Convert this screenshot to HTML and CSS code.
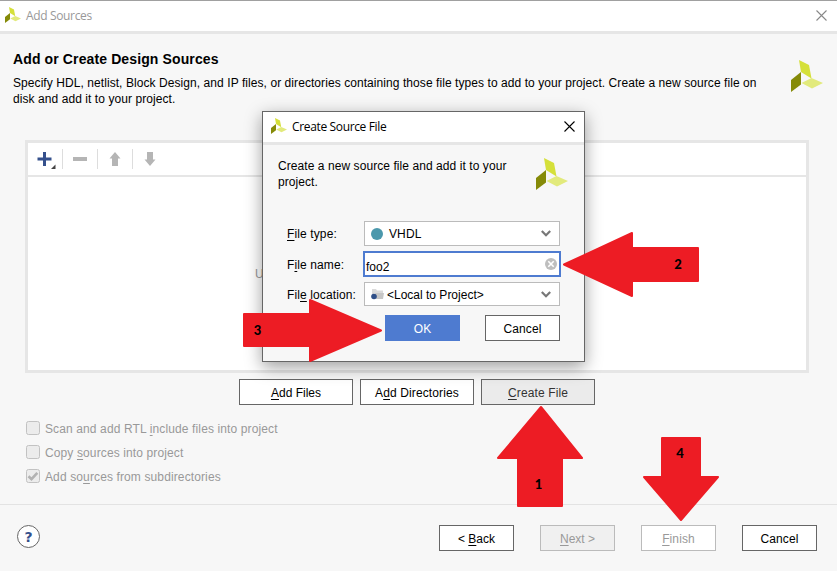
FILE: index.html
```html
<!DOCTYPE html>
<html lang="en">
<head>
<meta charset="utf-8">
<title>Add Sources</title>
<link rel="stylesheet" href="styles.css">
</head>
<body>
<svg width="0" height="0" class="defs">
  <symbol id="logo" viewBox="0 0 32 32">
    <path fill="#d5e03a" d="M8 0 18 5 20.500 18.500 10 12Z"/>
    <path fill="#858a08" d="M0 20 10 12V24.500L0 32Z"/>
    <path fill="#e2ea7c" d="M10.500 23 20.500 18 32 23 21 28.500Z"/>
  </symbol>
  <symbol id="close" viewBox="0 0 11 11"><path d="M.5.5l10 10M10.500.5l-10 10" fill="none" stroke="currentColor" stroke-width="1.100"/></symbol>
  <symbol id="chevron" viewBox="0 0 10 7"><path d="M.8 1 5 5.200 9.200 1" fill="none" stroke="#777" stroke-width="2.200"/></symbol>
</svg>
<div class="window">
  <header class="titlebar">
    <svg class="app-icon"><use href="#logo"/></svg><span class="title">Add Sources</span>
    <svg class="close"><use href="#close"/></svg>
  </header>
  <section class="intro">
    <div>
      <h1>Add or Create Design Sources</h1>
      <p>Specify HDL, netlist, Block Design, and IP files, or directories containing those file types to add to your project. Create a new source file on</p>
      <p>disk and add it to your project.</p>
    </div>
    <svg class="logo"><use href="#logo"/></svg>
  </section>
  <section class="panel">
    <div class="toolbar">
      <span class="tool"><svg width="20" height="20"><path d="M7.500 3v14M.5 10h14" stroke="#35508c" stroke-width="3"/><path d="M18.500 15.500V20H14Z" fill="#444"/></svg></span>
      <span class="tool"><svg width="20" height="20"><path d="M0 8h14v4H0Z" fill="#b5b5b5"/></svg></span>
      <span class="tool"><svg width="20" height="20"><path d="M7 3 12.500 9.500H10V17H4V9.500H1.500Z" fill="#b5b5b5"/></svg></span>
      <span class="tool"><svg width="20" height="20"><path d="M7 17 1.500 10.500H4V3H10V10.500H12.500Z" fill="#b5b5b5"/></svg></span>
    </div>
    <div class="empty">U</div>
  </section>
  <div class="actions">
    <button class="btn wide"><span><u>A</u>dd Files</span></button>
    <button class="btn wide"><span class="loose">A<u>d</u>d Directories</span></button>
    <button class="btn wide pressed"><span class="loose"><u>C</u>reate File</span></button>
  </div>
  <div class="options">
    <label><i class="box"></i><span class="loose">Scan and add RTL <u>i</u>nclude files into project</span></label>
    <label><i class="box"></i><span class="loose">Copy <u>s</u>ources into project</span></label>
    <label><i class="box"><svg width="12" height="12"><path d="M1.500 6.300 4.500 9.200 10.300 2.800" fill="none" stroke="#b2b2b2" stroke-width="2.600"/></svg></i><span class="loose">Add so<u>u</u>rces from subdirectories</span></label>
  </div>
  <footer>
    <span class="help">?</span>
    <div class="nav">
      <button class="btn"><span>&lt; <u>B</u>ack</span></button>
      <button class="btn disabled grey"><span><u>N</u>ext &gt;</span></button>
      <button class="btn disabled"><span class="loose"><u>F</u>inish</span></button>
      <button class="btn"><span class="loose">Cancel</span></button>
    </div>
  </footer>
</div>

<div class="dialog">
  <header class="titlebar">
    <svg class="app-icon"><use href="#logo"/></svg><span class="title">Create Source File</span>
    <svg class="close"><use href="#close"/></svg>
  </header>
  <div class="dialog-intro">
    <div><p>Create a new source file and add it to your</p><p>project.</p></div>
    <svg class="logo"><use href="#logo"/></svg>
  </div>
  <div class="form">
    <span class="lab"><u>F</u>ile type:</span>
    <div class="combo"><i class="dot"></i><span class="loose">VHDL</span><svg class="chev"><use href="#chevron"/></svg></div>
    <span class="lab lower">F<u>i</u>le name:</span>
    <div class="input"><span>foo2</span><svg width="12" height="12"><circle cx="6" cy="6" r="6" fill="#bebebe"/><path d="M3.300 3.300l5.400 5.400M8.700 3.300 3.300 8.700" stroke="#fff" stroke-width="1.600"/></svg></div>
    <span class="lab lower">Fil<u>e</u> location:</span>
    <div class="combo low"><svg class="folder" width="13" height="12"><path d="M1 1h4l1 1.500h6V5H4L2 8H1Z" fill="#dadada"/><path d="M4 5h9l-1 6H5Z" fill="#c6c6c6"/><circle cx="3" cy="8.500" r="2.800" fill="#2f4f88"/></svg><span class="lower">&lt;Local to Project&gt;</span><svg class="chev"><use href="#chevron"/></svg></div>
  </div>
  <div class="dialog-buttons">
    <button class="btn primary"><span>OK</span></button>
    <button class="btn"><span class="loose">Cancel</span></button>
  </div>
</div>

<svg class="callouts" width="837" height="571" viewBox="0 0 837 571">
  <g fill="#ed1c24" stroke="#ed1c24" stroke-width="2" stroke-linejoin="round">
    <path d="M541 407 582 458H562V506H518V458H498Z"/>
    <path d="M564 264.500 632 233V248H698V281H632V296Z"/>
    <path d="M381 330.500 310 300V314H244V346H310V361Z"/>
    <path d="M681 520 718 477H700V438H662V477H644Z"/>
  </g>
  <g class="num"><text x="538.500" y="489">1</text><text x="678" y="269">2</text><text x="257.500" y="335">3</text><text x="680" y="458">4</text></g>
</svg>
</body>
</html>
```
FILE: styles.css
```css
* { box-sizing: border-box; }
body { margin: 0; width: 837px; height: 571px; overflow: hidden; background: #f7f7f7; font: 12px/16px "Liberation Sans", Arial, sans-serif; color: #000; }
p, h1 { margin: 0; white-space: nowrap; }
p { letter-spacing: .07px; }
u { text-decoration: underline; text-underline-offset: 2px; text-decoration-thickness: 1px; text-decoration-skip-ink: none; }
svg { display: block; flex: none; }
.defs, .callouts { position: absolute; left: 0; top: 0; }
.loose { letter-spacing: .12px; }
.lower { padding-top: 1px; }
.window { height: 571px; display: flex; flex-direction: column; border-top: 1px solid #a0a0a0; }
.titlebar { display: flex; align-items: center; background: #fff; border-bottom: 3px solid #e6e6e6; height: 33px; flex: none; padding: 0 10px 2px 5px; }
.app-icon { width: 16px; height: 16px; margin-right: 5px; }
.title { font: 12px/16px "Open Sans", sans-serif; color: #999; padding-top: 1px; letter-spacing: -.35px; white-space: nowrap; }
.close { width: 11px; height: 11px; margin-left: auto; color: #888; }
.intro { display: flex; justify-content: space-between; padding: 17px 14px 0 13px; height: 106px; }
.intro h1 { font-size: 14px; line-height: 16px; color: #000; margin-bottom: 8px; letter-spacing: .12px; }
.intro .logo { margin-top: 9px; }
.logo { width: 32px; height: 32px; }
.panel { margin: 0 28px 0 25px; width: 784px; height: 233px; border: 3px solid #e6e6e6; background: #fff; flex: none; }
.toolbar { display: flex; height: 34px; border-bottom: 2px solid #e6e6e6; padding: 6px 0 0 9px; }
.tool { width: 35px; height: 20px; }
.tool + .tool { border-left: 1px solid #ddd; padding-left: 10px; }
.tool:first-child { width: 25px; }
.empty { padding: 89px 0 0 227px; color: #999; }
.actions { display: flex; justify-content: center; gap: 7px; padding-top: 6px; height: 48px; width: 834px; flex: none; }
.btn { width: 75px; height: 26px; padding: 1px 0 0; border: 1px solid #666; background: #fff; font: inherit; color: #000; display: block; white-space: nowrap; }
.wide { width: 114px; }
.pressed { background: #ebebeb; color: #333; }
.disabled { border-color: #bbb; color: #999; }
.grey { background: #f0f0f0; }
.primary { background: #4e7bd0; border-color: #4e7bd0; color: #fff; }
.options { height: 83px; padding-left: 26px; color: #999; flex: none; }
.options label { display: flex; align-items: center; height: 14px; margin-bottom: 10px; gap: 5px; }
.options span { padding-top: 1px; }
.box { width: 14px; height: 14px; border: 1px solid #c2c2c2; border-radius: 2.500px; background: #ececec; }
footer { border-top: 1px solid #e3e3e3; display: flex; justify-content: space-between; padding: 20px 20px 0 17px; height: 67px; flex: none; }
.help { width: 23px; height: 23px; border: 1px solid #666; border-radius: 50%; background: #fff; color: #35508c; font: bold 14px/22px "DejaVu Sans", sans-serif; text-align: center; }
.nav { display: flex; gap: 26px; }
.dialog { position: absolute; left: 262px; top: 111px; width: 323px; height: 251px; border: 1px solid #666; background: #f7f7f7; box-shadow: 0 5px 16px rgba(0,0,0,.38); }
.dialog .titlebar { padding-left: 8px; padding-right: 9px; }
.dialog .title { color: #000; }
.dialog .close { color: #000; }
.dialog-intro { display: flex; justify-content: space-between; padding: 13px 16px 0 15px; height: 76px; }
.form { display: grid; grid-template-columns: 77px 198px; row-gap: 5px; padding-left: 23px; align-items: center; }
.lab { white-space: nowrap; letter-spacing: .12px; padding-left: 1px; }
.combo { height: 25px; margin: 0 1px; border: 1px solid #bbb; background: #fff; display: flex; align-items: center; padding: 0 8px 0 6px; }
.low { height: 24px; }
.dot { width: 12px; height: 12px; border-radius: 50%; background: #4b98ac; margin-right: 6px; }
.folder { margin-right: 3px; }
.chev { width: 10px; height: 7px; margin-left: auto; }
.input { height: 26px; border: 2px solid #4e7bd0; background: #fff; display: flex; justify-content: space-between; align-items: center; padding: 0 2px 0 1px; }
.input span { padding-top: 6px; }
.dialog-buttons { display: flex; gap: 25px; padding: 9px 0 0 122px; }
.num { font: 900 13px Lato, sans-serif; text-anchor: middle; fill: #000; }
```
